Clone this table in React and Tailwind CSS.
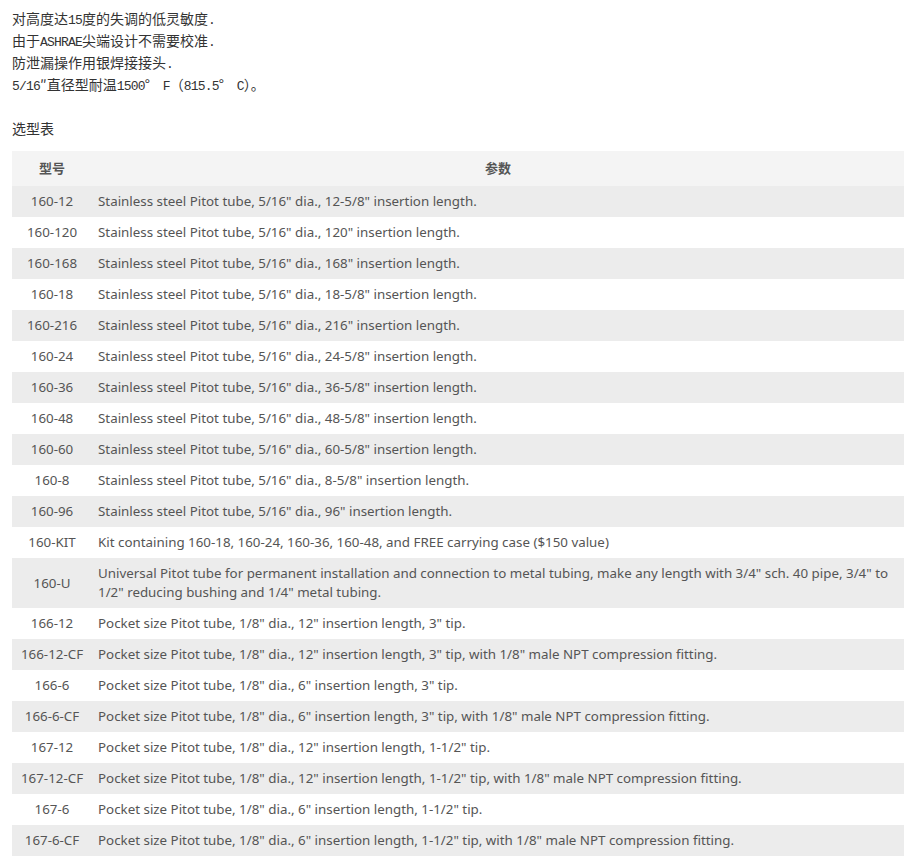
import React from "react";

const rows = [
  ["160-12", 'Stainless steel Pitot tube, 5/16" dia., 12-5/8" insertion length.'],
  ["160-120", 'Stainless steel Pitot tube, 5/16" dia., 120" insertion length.'],
  ["160-168", 'Stainless steel Pitot tube, 5/16" dia., 168" insertion length.'],
  ["160-18", 'Stainless steel Pitot tube, 5/16" dia., 18-5/8" insertion length.'],
  ["160-216", 'Stainless steel Pitot tube, 5/16" dia., 216" insertion length.'],
  ["160-24", 'Stainless steel Pitot tube, 5/16" dia., 24-5/8" insertion length.'],
  ["160-36", 'Stainless steel Pitot tube, 5/16" dia., 36-5/8" insertion length.'],
  ["160-48", 'Stainless steel Pitot tube, 5/16" dia., 48-5/8" insertion length.'],
  ["160-60", 'Stainless steel Pitot tube, 5/16" dia., 60-5/8" insertion length.'],
  ["160-8", 'Stainless steel Pitot tube, 5/16" dia., 8-5/8" insertion length.'],
  ["160-96", 'Stainless steel Pitot tube, 5/16" dia., 96" insertion length.'],
  ["160-KIT", "Kit containing 160-18, 160-24, 160-36, 160-48, and FREE carrying case ($150 value)"],
  ["160-U", 'Universal Pitot tube for permanent installation and connection to metal tubing, make any length with 3/4" sch. 40 pipe, 3/4" to 1/2" reducing bushing and 1/4" metal tubing.'],
  ["166-12", 'Pocket size Pitot tube, 1/8" dia., 12" insertion length, 3" tip.'],
  ["166-12-CF", 'Pocket size Pitot tube, 1/8" dia., 12" insertion length, 3" tip, with 1/8" male NPT compression fitting.'],
  ["166-6", 'Pocket size Pitot tube, 1/8" dia., 6" insertion length, 3" tip.'],
  ["166-6-CF", 'Pocket size Pitot tube, 1/8" dia., 6" insertion length, 3" tip, with 1/8" male NPT compression fitting.'],
  ["167-12", 'Pocket size Pitot tube, 1/8" dia., 12" insertion length, 1-1/2" tip.'],
  ["167-12-CF", 'Pocket size Pitot tube, 1/8" dia., 12" insertion length, 1-1/2" tip, with 1/8" male NPT compression fitting.'],
  ["167-6", 'Pocket size Pitot tube, 1/8" dia., 6" insertion length, 1-1/2" tip.'],
  ["167-6-CF", 'Pocket size Pitot tube, 1/8" dia., 6" insertion length, 1-1/2" tip, with 1/8" male NPT compression fitting.'],
];

const L = ({ children }) => (
  <span className="font-['Liberation_Mono',monospace] text-[13px] tracking-[-0.8px] leading-none">{children}</span>
);

const Deg = () => <span className="inline-block w-[11px]">°</span>;

export default function App() {
  return (
    <div className="bg-white w-[920px] h-[858px] overflow-hidden pt-[7px] px-3 text-[#333] font-['Noto_Sans_CJK_SC',sans-serif]">
      <div className="text-[14px] leading-[22px]">
        <div className="h-[22px] whitespace-nowrap">对高度达<L>15</L>度的失调的低灵敏度<L>.</L></div>
        <div className="h-[22px] whitespace-nowrap">由于<L>ASHRAE</L>尖端设计不需要校准<L>.</L></div>
        <div className="h-[22px] whitespace-nowrap">防泄漏操作用银焊接接头<L>.</L></div>
        <div className="h-[22px] whitespace-nowrap"><L>5/16</L>″直径型耐温<L>1500</L><Deg /><L> F</L>（<L>815.5</L><Deg /><L> C</L>）。</div>
        <div className="h-[22px]"></div>
        <div className="h-[22px]">选型表</div>
      </div>
      <table className="mt-3 w-[892px] border-collapse text-[13.35px] leading-[19px] text-[#555] font-['Noto_Sans','Noto_Sans_CJK_SC',sans-serif]">
        <thead>
          <tr className="bg-[#f4f4f4]">
            <th className="w-[80px] py-2 text-center font-bold text-[13px]">型号</th>
            <th className="py-2 text-center font-bold text-[13px]">参数</th>
          </tr>
        </thead>
        <tbody>
          {rows.map(([m, d], i) => (
            <tr key={m} className={i % 2 === 0 ? "bg-[#ececec]" : "bg-white"}>
              <td className="py-[6px] text-center whitespace-nowrap">{m}</td>
              <td className="py-[6px] pl-[6px] pr-2 text-left">{d}</td>
            </tr>
          ))}
        </tbody>
      </table>
    </div>
  );
}
